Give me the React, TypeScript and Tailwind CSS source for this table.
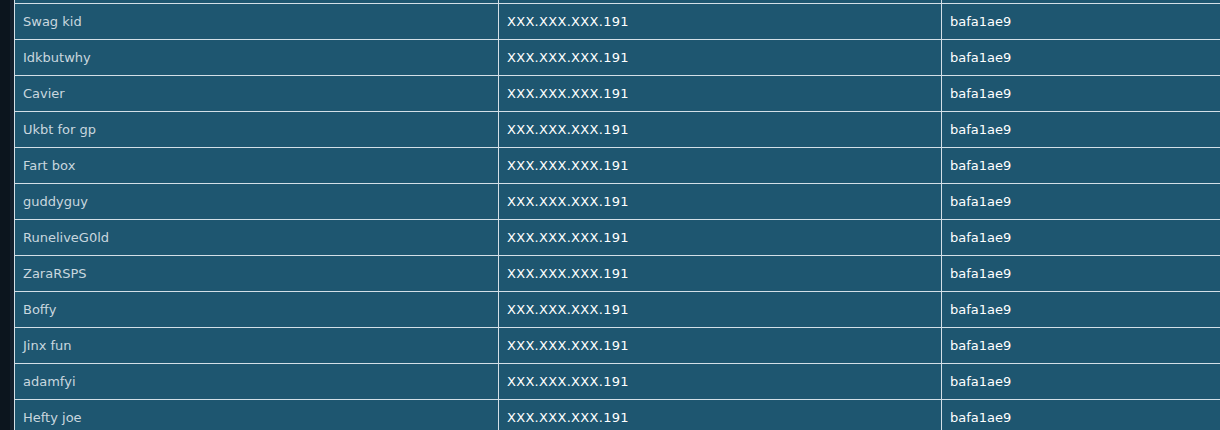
const nomes = [
  "Swag kid",
  "Idkbutwhy",
  "Cavier",
  "Ukbt for gp",
  "Fart box",
  "guddyguy",
  "RuneliveG0ld",
  "ZaraRSPS",
  "Boffy",
  "Jinx fun",
  "adamfyi",
  "Hefty joe",
]

function Linha({ nome }: { nome: string }) {
  return (
    <tr className="h-[36px]">
      <td className="w-[484px] border border-[#d3dfe7] pl-[8px] text-[#c9d6df]">{nome}</td>
      <td className="w-[443px] border border-[#d3dfe7] pl-[8px] tracking-[0.3px] text-white">XXX.XXX.XXX.191</td>
      <td className="border border-[#d3dfe7] pl-[8px] text-white">bafa1ae9</td>
    </tr>
  )
}

export default function App() {
  return (
    <div className="flex h-[430px] w-[1220px] overflow-hidden bg-[#0d1620] font-['DejaVu_Sans',sans-serif] text-[13px]">
      <div className="w-[10px] shrink-0 bg-[#0c151e]" />
      <div className="w-[4px] shrink-0 bg-[#121e2b]" />
      <div className="flex-1 overflow-hidden bg-[#1e5670]">
        <table className="mt-[-33px] w-[1240px] table-fixed border-collapse">
          <tbody>
            <tr className="h-[36px]">
              <td className="w-[484px] border border-[#d3dfe7]" />
              <td className="w-[443px] border border-[#d3dfe7]" />
              <td className="border border-[#d3dfe7]" />
            </tr>
            {nomes.map((n) => (
              <Linha key={n} nome={n} />
            ))}
          </tbody>
        </table>
      </div>
    </div>
  )
}
